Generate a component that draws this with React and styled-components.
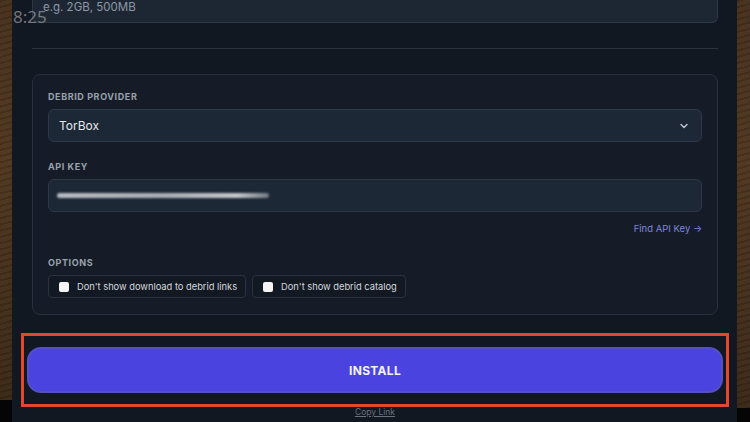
import React from "react";
import styled, { createGlobalStyle } from "styled-components";

const Global = createGlobalStyle`
  html, body { margin: 0; padding: 0; background: #000; }
  body { font-family: Inter, "Noto Sans", sans-serif; overflow: hidden; }
  * { box-sizing: border-box; }
`;

const Screen = styled.div`
  position: relative;
  width: 750px;
  height: 422px;
  display: flex;
  overflow: hidden;
`;

const Wood = styled.div`
  width: ${(p) => p.$w}px;
  display: flex;
  flex-direction: column;
`;

const WoodGrain = styled.div`
  flex: 1;
  background:
    repeating-linear-gradient(165deg, rgba(0,0,0,0.10) 0 2px, rgba(255,255,255,0.02) 2px 6px),
    linear-gradient(180deg, #46301c 0%, #4f361f 40%, #3a2816 100%);
`;

const WoodShadow = styled.div`
  height: ${(p) => p.$h}px;
  background: #050505;
`;

const Main = styled.div`
  flex: 1;
  background: #111822;
  display: flex;
  flex-direction: column;
  padding: 0 19px 0 20px;
`;

const Clock = styled.div`
  position: absolute;
  left: 13px;
  top: 5px;
  font-family: "Noto Sans", sans-serif;
  font-size: 17px;
  color: rgba(150, 150, 150, 0.75);
`;

const TopInput = styled.div`
  margin-top: -11px;
  height: 34px;
  background: #1d2734;
  border: 1px solid #2c3847;
  border-radius: 0 0 6px 6px;
  border-top: none;
  display: flex;
  align-items: flex-end;
  padding: 0 10px 8px;
  font-size: 11.5px;
  color: #8e97a3;
`;

const Divider = styled.div`
  height: 1px;
  background: #2a3340;
  margin: 25px 0 25px;
`;

const Card = styled.div`
  background: #151c27;
  border: 1px solid #27303d;
  border-radius: 8px;
  padding: 16px 15px 16px;
  display: flex;
  flex-direction: column;
`;

const Label = styled.div`
  font-size: 9px;
  line-height: 12px;
  font-weight: 700;
  letter-spacing: 0.6px;
  color: #9aa2ad;
  text-transform: uppercase;
  margin-top: ${(p) => p.$mt || 0}px;
  margin-bottom: 6px;
`;

const Field = styled.div`
  height: 33px;
  background: #1d2836;
  border: 1px solid #2d3949;
  border-radius: 6px;
  display: flex;
  align-items: center;
  justify-content: space-between;
  padding: 0 12px 0 10px;
  font-size: 12px;
  color: #e6e8eb;
`;

const Blur = styled.div`
  width: 212px;
  height: 5px;
  margin-left: -2px;
  border-radius: 3px;
  background: linear-gradient(90deg, #b9bdc3 0%, #a9aeb5 50%, #c5c8cc 85%, rgba(200,200,200,0.5) 100%);
  filter: blur(1.1px);
`;

const LinkRow = styled.div`
  display: flex;
  justify-content: flex-end;
  margin-top: 11px;
`;

const FindLink = styled.span`
  font-size: 9.5px;
  line-height: 12px;
  color: #7f86dc;
`;

const Options = styled.div`
  display: flex;
  gap: 6px;
`;

const Chip = styled.label`
  height: 23px;
  display: flex;
  align-items: center;
  gap: 8px;
  padding: 0 8px 0 10px;
  border: 1px solid #2a3340;
  border-radius: 4px;
  background: #121923;
  font-size: 9.3px;
  color: #d5d8dc;
`;

const Box = styled.span`
  width: 10px;
  height: 10px;
  background: #f4f4f4;
  border-radius: 2px;
`;

const Highlight = styled.div`
  margin: 18px -11px 0 -11px;
  border: 3px solid #e5472b;
  padding: 11px 3px;
`;

const InstallButton = styled.div`
  height: 46px;
  border-radius: 14px;
  background: #4b43df;
  border: 2px solid #5550c2;
  display: flex;
  align-items: center;
  justify-content: center;
  font-size: 12px;
  font-weight: 700;
  color: #f2f2f7;
  letter-spacing: 0.3px;
`;

const CopyLink = styled.div`
  text-align: center;
  font-size: 8.5px;
  color: #6b7280;
  text-decoration: underline;
`;

export default function App() {
  return (
    <>
      <Global />
      <Screen>
        <Wood $w={12}>
          <WoodGrain />
          <WoodShadow $h={22} />
        </Wood>
        <Main>
          <TopInput>e.g. 2GB, 500MB</TopInput>
          <Divider />
          <Card>
            <Label>Debrid Provider</Label>
            <Field>
              TorBox
              <svg width="10" height="10" viewBox="0 0 10 10">
                <path d="M2 3.5 L5 6.5 L8 3.5" stroke="#c3c7cd" strokeWidth="1.4" fill="none" strokeLinecap="round" strokeLinejoin="round" />
              </svg>
            </Field>
            <Label $mt={19}>API Key</Label>
            <Field>
              <Blur />
            </Field>
            <LinkRow>
              <FindLink>Find API Key →</FindLink>
            </LinkRow>
            <Label $mt={22}>Options</Label>
            <Options>
              <Chip>
                <Box />
                Don't show download to debrid links
              </Chip>
              <Chip>
                <Box />
                Don't show debrid catalog
              </Chip>
            </Options>
          </Card>
          <Highlight>
            <InstallButton>INSTALL</InstallButton>
          </Highlight>
          <CopyLink>Copy Link</CopyLink>
        </Main>
        <Wood $w={13}>
          <WoodGrain />
          <WoodShadow $h={14} />
        </Wood>
        <Clock>8:25</Clock>
      </Screen>
    </>
  );
}
